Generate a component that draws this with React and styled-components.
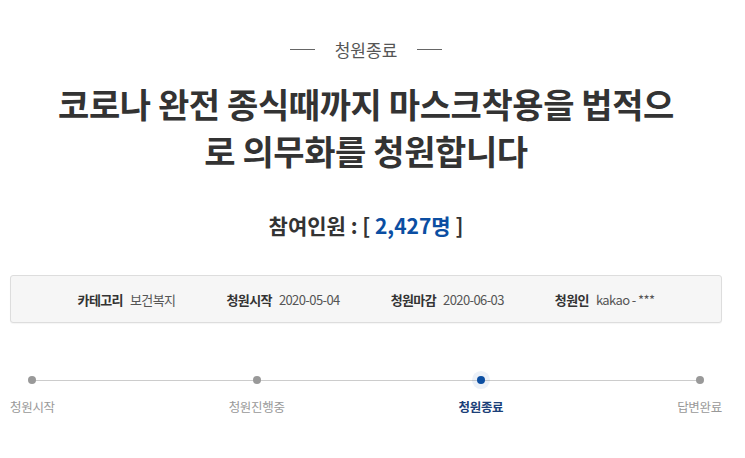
import React from 'react'
import styled, { createGlobalStyle } from 'styled-components'

const GlobalStyle = createGlobalStyle`
body {
  margin: 0;
  background: #fff;
  font-family: "Noto Sans CJK KR", "Noto Sans", sans-serif;
  color: #333;
}
`

const Page = styled.div`
width: 712px;
padding: 37px 0 0 10px;
`

const Status = styled.div`
display: flex;
align-items: center;
justify-content: center;
gap: 20px;
font-size: 17px;
line-height: 25px;
color: #555;

&::before, &::after {
  content: '';
  width: 25px;
  height: 1px;
  background: #666;
}
`

const Title = styled.h1`
margin: 18px 0 0;
text-align: center;
font-size: 34px;
line-height: 47px;
font-weight: 700;
color: #333;
letter-spacing: -0.4px;
`

const Count = styled.div`
margin-top: 37px;
text-align: center;
font-size: 21px;
line-height: 28px;
font-weight: 700;
color: #333;
`

const Number = styled.span`
color: #0b4ea2;
`

const InfoBox = styled.ul`
display: flex;
justify-content: center;
align-items: center;
gap: 51px;
margin: 36px 0 0;
padding: 0;
height: 46px;
list-style: none;
background: #f6f6f6;
border: 1px solid #ddd;
border-radius: 3px;
box-shadow: 0 1px 1px rgba(0, 0, 0, 0.04);
`

const InfoItem = styled.li`
display: flex;
gap: 7px;
font-size: 13px;
letter-spacing: -0.6px;
color: #555;
`

const InfoLabel = styled.strong`
color: #333;
font-weight: 700;
`

const Progress = styled.ol`
position: relative;
display: flex;
justify-content: space-between;
margin: 53px 0 0;
padding: 0;
list-style: none;

&::before {
  content: '';
  position: absolute;
  left: 23px;
  right: 23px;
  top: 4px;
  height: 1px;
  background: #ccc;
}
`

const Step = styled.li`
position: relative;
display: flex;
flex-direction: column;
align-items: center;
gap: 14px;
font-size: 12.5px;
line-height: 18px;
letter-spacing: -0.3px;
color: ${p => (p.$active ? '#1b3f78' : '#999')};
font-weight: ${p => (p.$active ? 700 : 400)};
`

const Dot = styled.span`
width: 8px;
height: 8px;
border-radius: 50%;
background: ${p => (p.$active ? '#0b4ea2' : '#999')};
box-shadow: ${p => (p.$active ? '0 0 0 5px rgba(11, 78, 162, 0.08)' : 'none')};
`

const info = [
  ['카테고리', '보건복지'],
  ['청원시작', '2020-05-04'],
  ['청원마감', '2020-06-03'],
  ['청원인', 'kakao - ***'],
]

const steps = ['청원시작', '청원진행중', '청원종료', '답변완료']

const App = () => {
  return (
    <Page>
      <GlobalStyle />
      <Status>청원종료</Status>
      <Title>
        코로나 완전 종식때까지 마스크착용을 법적으
        <br />
        로 의무화를 청원합니다
      </Title>
      <Count>
        참여인원 : [ <Number>2,427명</Number> ]
      </Count>
      <InfoBox>
        {info.map(([label, value]) => (
          <InfoItem key={label}>
            <InfoLabel>{label}</InfoLabel>
            <span>{value}</span>
          </InfoItem>
        ))}
      </InfoBox>
      <Progress>
        {steps.map((s, i) => (
          <Step key={s} $active={i === 2}>
            <Dot $active={i === 2} />
            {s}
          </Step>
        ))}
      </Progress>
    </Page>
  )
}

export default App
